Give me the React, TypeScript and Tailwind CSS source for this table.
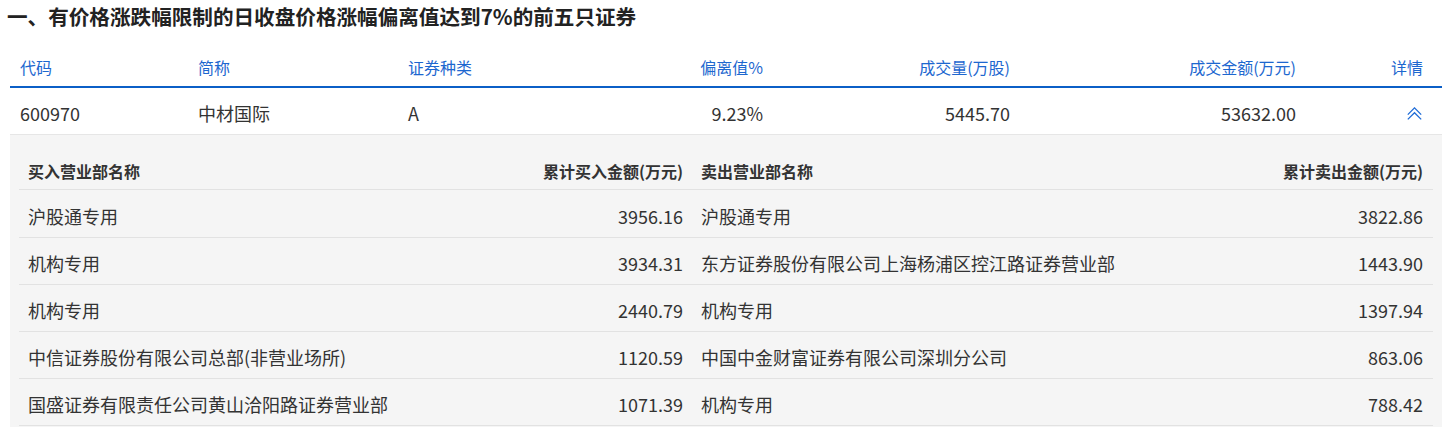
import React from "react";

const buyRows = [
  { buyer: "沪股通专用", buyAmt: "3956.16", seller: "沪股通专用", sellAmt: "3822.86" },
  { buyer: "机构专用", buyAmt: "3934.31", seller: "东方证券股份有限公司上海杨浦区控江路证券营业部", sellAmt: "1443.90" },
  { buyer: "机构专用", buyAmt: "2440.79", seller: "机构专用", sellAmt: "1397.94" },
  { buyer: "中信证券股份有限公司总部(非营业场所)", buyAmt: "1120.59", seller: "中国中金财富证券有限公司深圳分公司", sellAmt: "863.06" },
  { buyer: "国盛证券有限责任公司黄山洽阳路证券营业部", buyAmt: "1071.39", seller: "机构专用", sellAmt: "788.42" },
];

const ChevronsUp = () => (
  <svg width="15" height="13" viewBox="0 0 15 13" fill="none" stroke="#1e6bd6" strokeWidth="1.3">
    <polyline points="0.8,7.6 7.5,0.9 14.2,7.6" />
    <polyline points="0.8,12.4 7.5,5.7 14.2,12.4" />
  </svg>
);

const App = () => {
  const mainCols = "grid grid-cols-[178px_210px_202px_173px_247px_286px_136px]";
  const subCols = "grid grid-cols-[460px_213px_520px_221px]";

  return (
    <div className="w-[1447px] h-[427px] overflow-hidden bg-white text-[#333] font-['Noto_Sans_CJK_SC','Noto_Sans',sans-serif]">
      {/* Title */}
      <h2 className="h-[31px] pl-[7px] pt-[1px] text-[20.6px] font-bold leading-[30px] text-[#222]">
        一、有价格涨跌幅限制的日收盘价格涨幅偏离值达到7%的前五只证券
      </h2>

      <div className="ml-[10px] mt-[19px] w-[1432px]">
        {/* Main header */}
        <div className={`${mainCols} h-[38px] items-center border-b-2 border-[#0b5fc7] pb-[2px] text-[16px] text-[#1d67cf]`}>
          <div className="px-[10px]">代码</div>
          <div className="px-[10px]">简称</div>
          <div className="px-[10px]">证券种类</div>
          <div className="px-[10px] text-right">偏离值%</div>
          <div className="px-[10px] text-right">成交量(万股)</div>
          <div className="px-[10px] text-right">成交金额(万元)</div>
          <div className="pr-[19px] text-right">详情</div>
        </div>

        {/* Data row */}
        <div className={`${mainCols} h-[47px] items-center border-b border-[#e6e6e6] pt-[4px] text-[18px]`}>
          <div className="px-[10px]">600970</div>
          <div className="px-[10px]">中材国际</div>
          <div className="px-[10px]">A</div>
          <div className="px-[10px] text-right">9.23%</div>
          <div className="px-[10px] text-right">5445.70</div>
          <div className="px-[10px] text-right">53632.00</div>
          <div className="flex justify-end pr-[20px]">
            <ChevronsUp />
          </div>
        </div>

        {/* Detail panel */}
        <div className="bg-[#f5f5f5] px-[9px] pt-[18px] pb-[8px]">
          <div className={`${subCols} h-[37px] items-center border-b border-[#e2e2e2] text-[16px] font-bold`}>
            <div className="px-[9px]">买入营业部名称</div>
            <div className="px-[9px] text-right">累计买入金额(万元)</div>
            <div className="px-[9px]">卖出营业部名称</div>
            <div className="pl-[9px] pr-[10px] text-right">累计卖出金额(万元)</div>
          </div>
          {buyRows.map((r, i) => (
            <div
              key={i}
              className={`${subCols} ${i === 0 ? "h-[48px]" : "h-[47px]"} items-center border-b border-[#e2e2e2] pt-[5px] text-[18px]`}
            >
              <div className="px-[9px] whitespace-nowrap">{r.buyer}</div>
              <div className="px-[9px] text-right">{r.buyAmt}</div>
              <div className="px-[9px] whitespace-nowrap">{r.seller}</div>
              <div className="pl-[9px] pr-[10px] text-right">{r.sellAmt}</div>
            </div>
          ))}
        </div>
      </div>
    </div>
  );
};

export default App;
